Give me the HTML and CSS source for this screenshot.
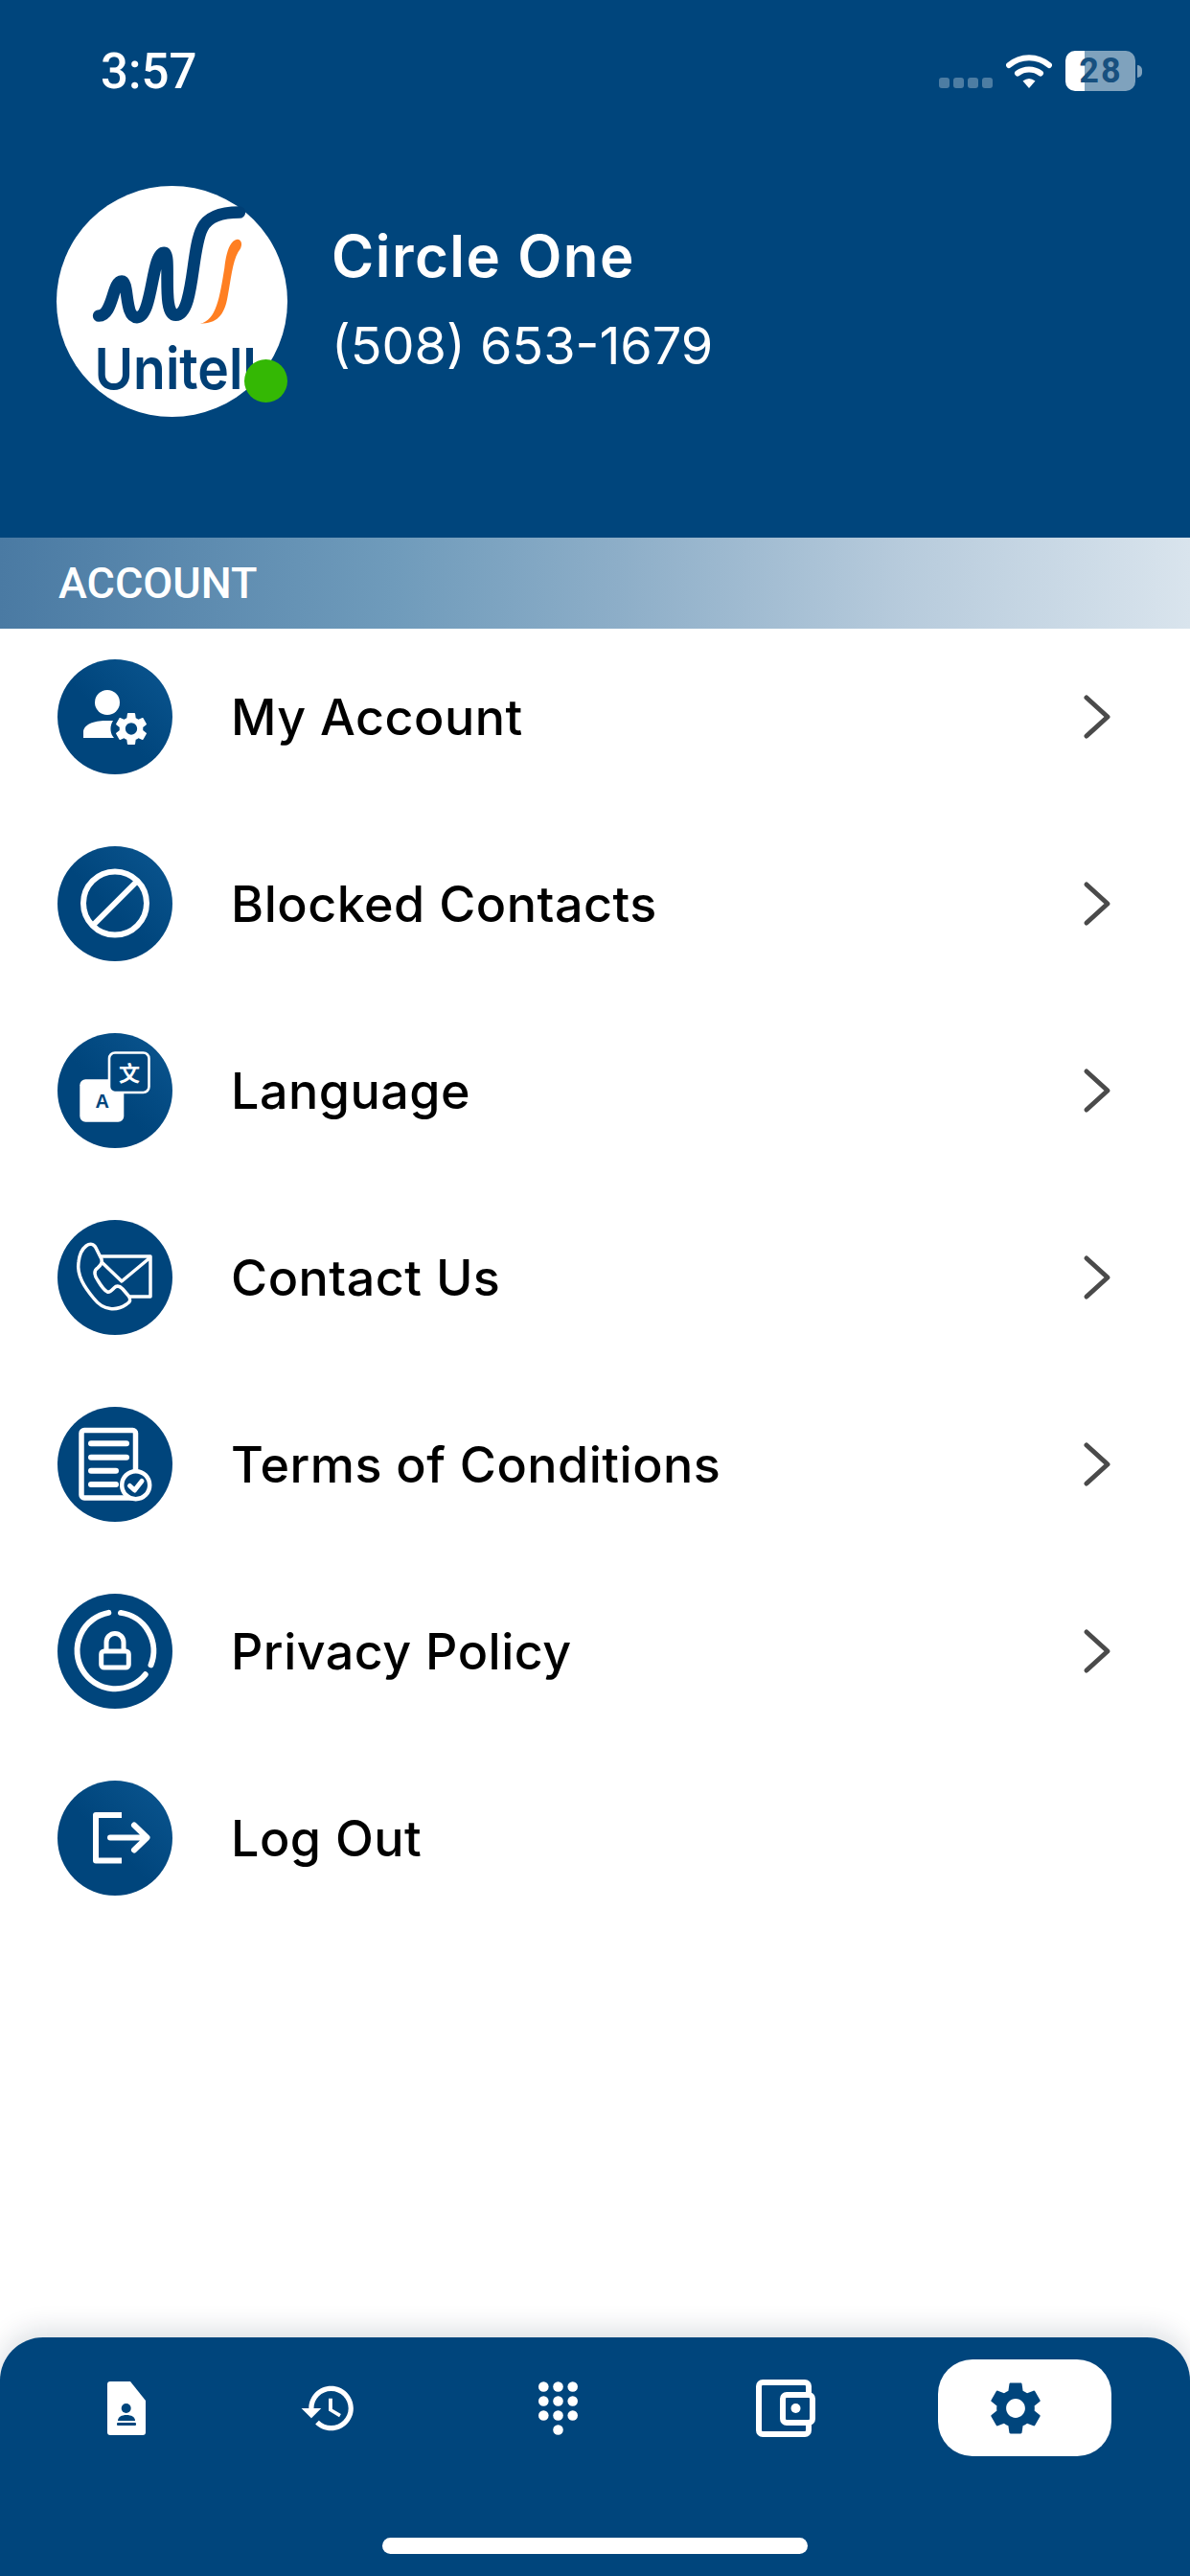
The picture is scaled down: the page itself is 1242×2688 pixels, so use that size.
FILE: index.html
```html
<!DOCTYPE html>
<html lang="en">
<head>
<meta charset="utf-8">
<title>Account</title>
<link rel="stylesheet" href="styles.css">
</head>
<body>
<svg class="defs" width="0" height="0" aria-hidden="true">
  <symbol id="gear" viewBox="0 0 24 24"><path d="M19.14 12.94c.04-.3.06-.61.06-.94 0-.32-.02-.64-.07-.94l2.03-1.58c.18-.14.23-.41.12-.61l-1.92-3.32c-.12-.22-.37-.29-.59-.22l-2.39.96c-.5-.38-1.03-.7-1.62-.94l-.36-2.54c-.04-.24-.24-.41-.48-.41h-3.84c-.24 0-.43.17-.47.41l-.36 2.54c-.59.24-1.13.57-1.62.94l-2.39-.96c-.22-.08-.47 0-.59.22L2.74 8.87c-.12.21-.08.47.12.61l2.03 1.58c-.05.3-.09.63-.09.94s.02.64.07.94l-2.03 1.58c-.18.14-.23.41-.12.61l1.92 3.32c.12.22.37.29.59.22l2.39-.96c.5.38 1.03.7 1.62.94l.36 2.54c.05.24.24.41.48.41h3.84c.24 0 .44-.17.47-.41l.36-2.54c.59-.24 1.13-.56 1.62-.94l2.39.96c.22.08.47 0 .59-.22l1.92-3.32c.12-.22.07-.47-.12-.61l-2.01-1.58zM12 15.6c-1.98 0-3.6-1.62-3.6-3.6s1.62-3.6 3.6-3.6 3.6 1.62 3.6 3.6-1.62 3.6-3.6 3.6z"/></symbol>
  <symbol id="chev" viewBox="0 0 30 48"><path d="M4 4 L26 24 L4 44" fill="none" stroke="#4a4a4a" stroke-width="5" stroke-linecap="round" stroke-linejoin="round"/></symbol>
</svg>
<div class="app">
  <header class="top">
    <div class="status">
      <span class="time">3:57</span>
      <div class="status-right">
        <div class="signal"><i></i><i></i><i></i><i></i></div>
        <svg class="wifi" viewBox="0 0 48 37"><path d="M3 13A32 32 0 0 1 45 13M12 21.500A20 20 0 0 1 36 21.500" fill="none" stroke="#fff" stroke-width="6" stroke-linecap="round"/><path d="M24 37L17.500 29.500Q24 24.500 30.500 29.500Z" fill="#fff"/></svg>
        <div class="battery"><span>28</span></div>
        <div class="nub"></div>
      </div>
    </div>
    <div class="profile">
      <div class="avatar">
        <svg class="logo" viewBox="57 72 726 726">
          <path d="M190 480C235 480 232 372 262 372C285 372 270 485 310 485C360 485 355 282 395 282C420 282 385 478 432 478C490 478 480 270 515 205C535 165 585 155 632 155" fill="none" stroke="#003f75" stroke-width="38" stroke-linecap="round"/>
          <path d="M508 505C560 495 570 420 585 330C590 285 600 245 625 240C640 240 645 260 628 280C610 310 605 370 595 420C585 480 560 505 508 505Z" fill="#ff7f22"/>
          <text class="logo-text" x="176" y="712" textLength="510" lengthAdjust="spacingAndGlyphs">Unitell</text>
        </svg>
        <span class="online"></span>
      </div>
      <div class="who">
        <div class="name">Circle One</div>
        <div class="phone">(508) 653-1679</div>
      </div>
    </div>
  </header>
  <div class="section">ACCOUNT</div>
  <ul class="menu">
    <li class="row">
      <svg class="ico ico-g" viewBox="0 0 120 120"><circle cx="52" cy="45" r="13" fill="#fff"/><path d="M27 82V76C27 68 38 64 50 64H58C54 70 55 78 59 82Z" fill="#fff"/><use href="#gear" x="56.500" y="52" width="41" height="41" fill="#fff"/></svg>
      <span class="label">My Account</span>
      <svg class="chev"><use href="#chev"/></svg>
    </li>
    <li class="row">
      <svg class="ico ico-g" viewBox="0 0 120 120"><g fill="none" stroke="#fff" stroke-width="6"><circle cx="60" cy="59.500" r="33"/><path d="M83 36.500L37 82.500"/></g></svg>
      <span class="label">Blocked Contacts</span>
      <svg class="chev"><use href="#chev"/></svg>
    </li>
    <li class="row">
      <svg class="ico ico-g" viewBox="0 0 120 120"><rect x="23.300" y="48.300" width="46" height="44.400" rx="6" fill="#fff"/><rect x="54" y="20.500" width="41.500" height="41.500" rx="6" fill="#00457c" stroke="#fff" stroke-width="2.600"/><text class="cjk" x="75" y="50" text-anchor="middle">文</text><text class="latin" x="46.700" y="78" text-anchor="middle">A</text></svg>
      <span class="label">Language</span>
      <svg class="chev"><use href="#chev"/></svg>
    </li>
    <li class="row">
      <svg class="ico" viewBox="0 0 120 120"><g stroke="#fff" stroke-width="3.500" stroke-linejoin="round" stroke-linecap="round"><path d="M43 38H97V80H66M43 41L67 64L97 39" fill="none"/><path d="M30 27C34 24 38 25 40 29L46 41C47 45 45 47 42 50C37 53 39 59 42 63C45 68 48 73 52 75C55 76 57 73 59 71C62 68 65 69 68 72L74 79C77 83 76 86 72 88C62 95 48 95 38 82C28 70 20 58 22 44C23 35 26 30 30 27Z" fill="#00457c"/></g></svg>
      <span class="label">Contact Us</span>
      <svg class="chev"><use href="#chev"/></svg>
    </li>
    <li class="row">
      <svg class="ico" viewBox="0 0 120 120"><g fill="none" stroke="#fff" stroke-linecap="round" stroke-linejoin="round"><rect x="25" y="24.500" width="56.500" height="70.500" rx="3" stroke-width="5.500"/><path d="M35 38.300H72M35 52.700H72M35 66.700H61M35 81H61" stroke-width="6"/><circle cx="81.700" cy="81.700" r="14.500" fill="#00457c" stroke-width="4.500"/><path d="M75.500 82.500L80.500 87L88 77.500" stroke-width="5"/></g></svg>
      <span class="label">Terms of Conditions</span>
      <svg class="chev"><use href="#chev"/></svg>
    </li>
    <li class="row">
      <svg class="ico" viewBox="0 0 120 120"><g fill="none" stroke="#fff" stroke-linecap="round" stroke-linejoin="round"><path d="M53.300 19.900A40 40 0 1 0 91.700 84.300M66 19.900A40 40 0 0 1 97.500 74.300" stroke-width="6"/><rect x="45.700" y="60" width="28.600" height="17" rx="3" stroke-width="5"/><path d="M51 59V50.500A9 9 0 0 1 69 50.500V59" stroke-width="5"/></g></svg>
      <span class="label">Privacy Policy</span>
      <svg class="chev"><use href="#chev"/></svg>
    </li>
    <li class="row">
      <svg class="ico ico-g" viewBox="0 0 120 120"><g fill="none" stroke="#fff" stroke-width="6" stroke-linejoin="round"><path d="M67 36H40V83.500H67"/><path d="M55 59.500H93M80 46.500L93.500 59.500L80 72.500" stroke-linecap="round"/></g></svg>
      <span class="label">Log Out</span>
    </li>
  </ul>
  <nav class="tabs">
    <div class="tab-row">
      <div class="tab">
        <svg class="t-file" viewBox="0 0 40 56"><path d="M3 0H24L40 20V53A3 3 0 0 1 37 56H3A3 3 0 0 1 0 53V3A3 3 0 0 1 3 0Z" fill="#fff"/><circle cx="19.700" cy="28" r="5" fill="#00457c"/><path d="M11 41C11 37 15 35 20 35S29 37 29 41Z" fill="#00457c"/><rect x="10" y="43" width="20" height="3" rx="1" fill="#00457c"/></svg>
      </div>
      <div class="tab">
        <svg class="t-history" viewBox="0 0 24 24"><path fill="#fff" d="M13 3c-4.970 0-9 4.030-9 9H1l3.890 3.890.07.14L9 12H6c0-3.870 3.130-7 7-7s7 3.130 7 7-3.130 7-7 7c-1.930 0-3.680-.79-4.940-2.060l-1.420 1.420C8.270 19.990 10.510 21 13 21c4.970 0 9-4.030 9-9s-4.030-9-9-9zm-1 5v5l4.280 2.540.72-1.210-3.500-2.080V8H12z"/></svg>
      </div>
      <div class="tab">
        <svg class="t-dial" viewBox="0 0 41 56" fill="#fff"><circle cx="5.300" cy="5.500" r="5.300"/><circle cx="20.500" cy="5.500" r="5.300"/><circle cx="35.700" cy="5.500" r="5.300"/><circle cx="5.300" cy="20.500" r="5.300"/><circle cx="20.500" cy="20.500" r="5.300"/><circle cx="35.700" cy="20.500" r="5.300"/><circle cx="5.300" cy="35.500" r="5.300"/><circle cx="20.500" cy="35.500" r="5.300"/><circle cx="35.700" cy="35.500" r="5.300"/><circle cx="20.500" cy="50.500" r="5.300"/></svg>
      </div>
      <div class="tab">
        <svg class="t-wallet" viewBox="0 0 62 60"><rect x="3" y="3" width="52" height="54" rx="4" fill="none" stroke="#fff" stroke-width="6"/><rect x="28" y="16" width="31" height="29" rx="4" fill="#00457c" stroke="#fff" stroke-width="6"/><circle cx="41.500" cy="30" r="5" fill="#fff"/></svg>
      </div>
      <div class="tab tab-active">
        <svg class="t-gear"><use href="#gear"/></svg>
      </div>
    </div>
    <div class="home"></div>
  </nav>
</div>
</body>
</html>
```
FILE: styles.css
```css
* { box-sizing: border-box; }
html, body { margin: 0; padding: 0; background: #fff; }
.defs { position: absolute; }
.app {
  width: 1242px;
  height: 2688px;
  display: flex;
  flex-direction: column;
  overflow: hidden;
  font-family: Inter, "Liberation Sans", sans-serif;
}
.top { height: 561px; background: #00457c; color: #fff; }
.status {
  height: 194px;
  padding: 53px 50px 0 105px;
  display: flex;
  justify-content: space-between;
  align-items: flex-start;
}
.time {
  font-family: Roboto, sans-serif;
  font-weight: 500;
  font-size: 51px;
  line-height: 44px;
}
.status-right { display: flex; align-items: flex-start; }
.signal { display: flex; gap: 4px; margin-top: 28px; margin-right: 14px; }
.signal i { width: 11px; height: 11px; border-radius: 3px; background: #4d7da3; }
.wifi { width: 48px; height: 37px; margin-top: 2px; margin-right: 14px; }
.battery {
  width: 73px;
  height: 42px;
  border-radius: 10px;
  background: linear-gradient(to right, #fff 20px, #7fa2bd 20px);
  display: flex;
  align-items: center;
  justify-content: center;
  color: #17507f;
  font-family: Roboto, sans-serif;
  font-weight: 700;
  font-size: 36px;
  letter-spacing: 2px;
  line-height: 42px;
}
.battery span { margin-left: 1px; }
.nub { width: 5px; height: 13px; margin: 15px 0 0 2px; border-radius: 0 7px 7px 0; background: #7fa2bd; }
.profile { display: flex; align-items: center; padding-left: 59px; gap: 46px; }
.avatar { position: relative; width: 241px; height: 241px; border-radius: 50%; background: #fff; flex: none; }
.logo { display: block; width: 100%; height: 100%; overflow: hidden; }
.logo-text { font-family: Inter, sans-serif; font-weight: 600; font-size: 180px; fill: #003f75; }
.online {
  position: absolute;
  right: 0;
  bottom: 15px;
  width: 45px;
  height: 45px;
  border-radius: 50%;
  background: #34b804;
}
.who { display: flex; flex-direction: column; gap: 29px; margin-top: -3px; }
.name { font-weight: 600; font-size: 60px; letter-spacing: 1.5px; line-height: 66px; white-space: nowrap; }
.phone { font-weight: 400; font-size: 54px; line-height: 64px; white-space: nowrap; }
.section {
  height: 95px;
  padding-left: 61px;
  display: flex;
  align-items: center;
  font-family: Roboto, sans-serif;
  font-weight: 500;
  font-size: 45px;
  color: #fff;
  background: linear-gradient(to right, #4a7aa3 0%, #6f9bbb 33%, #8daec8 52%, #b7cbdc 76%, #d9e4ed 100%);
}
.menu {
  list-style: none;
  margin: 0;
  padding: 32px 0 0;
  display: flex;
  flex-direction: column;
  gap: 75px;
}
.row { display: flex; align-items: center; height: 120px; padding: 0 82px 0 60px; }
.ico { width: 120px; height: 120px; flex: none; border-radius: 50%; background: #00457c; }
.ico-g { background: linear-gradient(45deg, #00457c 45%, #0b5690 100%); }
.label {
  flex: 1;
  margin-left: 61px;
  font-size: 52px;
  letter-spacing: 0.5px;
  font-weight: 450;
  color: #000;
  white-space: nowrap;
}
.chev { width: 30px; height: 48px; flex: none; }
.cjk { font-family: "Noto Sans CJK SC", sans-serif; font-weight: 700; font-size: 22px; fill: #fff; }
.latin { font-family: "Liberation Sans", sans-serif; font-weight: 700; font-size: 20px; fill: #00457c; }
.tabs {
  margin-top: auto;
  height: 249px;
  padding-top: 23px;
  background: #00457c;
  border-radius: 45px 45px 0 0;
  box-shadow: 0 -8px 28px rgba(0, 30, 60, .14);
  position: relative;
}
.tab-row {
  display: grid;
  grid-template-columns: 264px 158px 320px 156px 1fr;
  height: 101px;
  align-items: center;
  justify-items: center;
}
.t-file { width: 40px; height: 56px; display: block; }
.t-history { width: 62px; height: 62px; display: block; }
.t-dial { width: 41px; height: 56px; display: block; }
.t-wallet { width: 62px; height: 60px; display: block; }
.tab-active {
  justify-self: end;
  margin-right: 82px;
  width: 181px;
  height: 101px;
  border-radius: 36px;
  background: #fff;
  display: flex;
  align-items: center;
  justify-content: center;
  padding-right: 20px;
}
.t-gear { width: 66px; height: 66px; fill: #00457c; display: block; }
.home { width: 444px; height: 17px; margin: 85px auto 0; border-radius: 9px; background: #fff; }
```
